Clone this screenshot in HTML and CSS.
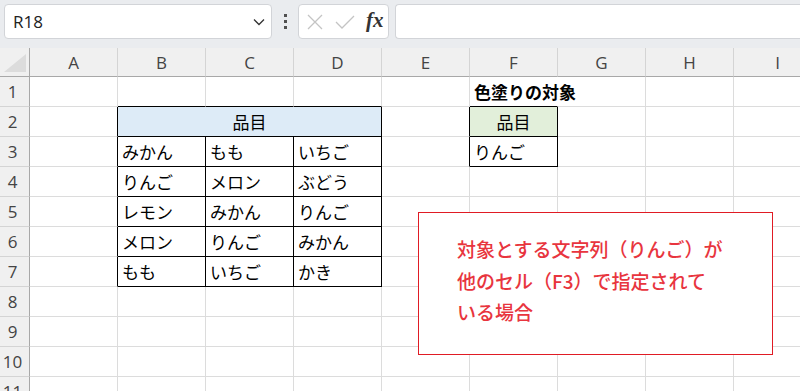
FILE: index.html
```html
<!DOCTYPE html>
<html lang="ja">
<head>
<meta charset="utf-8">
<title>Excel</title>
<link rel="stylesheet" href="styles.css">
</head>
<body>
<div class="toolbar">
  <div class="namebox">
    <span class="name">R18</span>
    <svg class="chev" width="12" height="8" viewBox="0 0 12 8"><path d="M1 1.5 L6 6.5 L11 1.5" fill="none" stroke="#333" stroke-width="1.3"/></svg>
  </div>
  <div class="dots"><i></i><i></i><i></i></div>
  <div class="fbtns">
    <svg class="ico" width="16" height="16" viewBox="0 0 16 16"><path d="M1 1 L15 15 M15 1 L1 15" fill="none" stroke="#c4c4c4" stroke-width="1.3"/></svg>
    <svg class="ico" width="20" height="16" viewBox="0 0 20 16"><path d="M1 8 L7 14 L19 2" fill="none" stroke="#c4c4c4" stroke-width="1.3"/></svg>
    <span class="fx">fx</span>
  </div>
  <div class="formula"></div>
</div>

<div class="sheet">
  <div class="corner"><span class="tri"></span></div>
  <div class="ch">A</div><div class="ch">B</div><div class="ch">C</div><div class="ch">D</div><div class="ch">E</div><div class="ch">F</div><div class="ch">G</div><div class="ch">H</div><div class="ch">I</div>

  <div class="rh">1</div>
  <div class="c"></div><div class="c tt"></div><div class="c tt"></div><div class="c tt"></div><div class="c"></div><div class="c tt nor bold">色塗りの対象</div><div class="c"></div><div class="c"></div><div class="c"></div>

  <div class="rh">2</div>
  <div class="c tl"></div><div class="c t blue span3">品目</div><div class="c tl"></div><div class="c t green">品目</div><div class="c"></div><div class="c"></div><div class="c"></div>

  <div class="rh">3</div>
  <div class="c tl"></div><div class="c t">みかん</div><div class="c t">もも</div><div class="c t">いちご</div><div class="c tl"></div><div class="c t">りんご</div><div class="c"></div><div class="c"></div><div class="c"></div>

  <div class="rh">4</div>
  <div class="c tl"></div><div class="c t">りんご</div><div class="c t">メロン</div><div class="c t">ぶどう</div><div class="c"></div><div class="c"></div><div class="c"></div><div class="c"></div><div class="c"></div>

  <div class="rh">5</div>
  <div class="c tl"></div><div class="c t">レモン</div><div class="c t">みかん</div><div class="c t">りんご</div><div class="c"></div><div class="c"></div><div class="c"></div><div class="c"></div><div class="c"></div>

  <div class="rh">6</div>
  <div class="c tl"></div><div class="c t">メロン</div><div class="c t">りんご</div><div class="c t">みかん</div><div class="c"></div><div class="c"></div><div class="c"></div><div class="c"></div><div class="c"></div>

  <div class="rh">7</div>
  <div class="c tl"></div><div class="c t">もも</div><div class="c t">いちご</div><div class="c t">かき</div><div class="c"></div><div class="c"></div><div class="c"></div><div class="c"></div><div class="c"></div>

  <div class="rh">8</div>
  <div class="c"></div><div class="c"></div><div class="c"></div><div class="c"></div><div class="c"></div><div class="c"></div><div class="c"></div><div class="c"></div><div class="c"></div>

  <div class="rh">9</div>
  <div class="c"></div><div class="c"></div><div class="c"></div><div class="c"></div><div class="c"></div><div class="c"></div><div class="c"></div><div class="c"></div><div class="c"></div>

  <div class="rh">10</div>
  <div class="c"></div><div class="c"></div><div class="c"></div><div class="c"></div><div class="c"></div><div class="c"></div><div class="c"></div><div class="c"></div><div class="c"></div>

  <div class="rh">11</div>
  <div class="c"></div><div class="c"></div><div class="c"></div><div class="c"></div><div class="c"></div><div class="c"></div><div class="c"></div><div class="c"></div><div class="c"></div>
</div>

<div class="callout">対象とする文字列（りんご）が<br>他のセル（F3）で指定されて<br>いる場合</div>
</body>
</html>
```

FILE: styles.css
```css
html, body {
  margin: 0;
  padding: 0;
  width: 800px;
  height: 391px;
  overflow: hidden;
  background: #ffffff;
}
body {
  position: relative;
  font-family: "Noto Sans CJK JP", "Noto Sans", sans-serif;
}

.toolbar {
  height: 48px;
  box-sizing: border-box;
  background: #eaecef;
  display: flex;
  align-items: flex-start;
  padding: 4px 0 0 4px;
}
.namebox {
  width: 268px;
  height: 35px;
  box-sizing: border-box;
  background: #fff;
  border: 1px solid #d2d4d8;
  border-radius: 4px;
  display: flex;
  align-items: center;
  justify-content: space-between;
  padding: 0 6px 0 8px;
}
.name {
  font-family: "Open Sans", "Noto Sans", sans-serif;
  font-size: 17px;
  color: #222;
}
.chev { margin-top: 1px; }
.dots {
  width: 26px;
  height: 35px;
  display: flex;
  flex-direction: column;
  align-items: center;
  justify-content: center;
  gap: 3px;
}
.dots i {
  display: block;
  width: 3px;
  height: 3px;
  background: #505050;
}
.fbtns {
  width: 91px;
  height: 35px;
  box-sizing: border-box;
  background: #fff;
  border: 1px solid #d2d4d8;
  border-radius: 4px;
  display: flex;
  align-items: center;
  padding: 0 0 0 8px;
  gap: 12px;
}
.ico { display: block; }
.fx {
  font-family: "Liberation Serif", "DejaVu Serif", serif;
  font-style: italic;
  font-weight: bold;
  font-size: 21px;
  color: #333;
  margin-left: -1px;
  margin-top: -3px;
}
.formula {
  margin-left: 6px;
  flex: 1;
  height: 35px;
  box-sizing: border-box;
  background: #fff;
  border: 1px solid #d2d4d8;
  border-right: none;
  border-radius: 4px 0 0 4px;
}

.sheet {
  display: grid;
  grid-template-columns: 30px repeat(9, 88px);
  grid-template-rows: 29px repeat(11, 30px);
  width: 822px;
}
.sheet > div {
  box-sizing: border-box;
  border-right: 1px solid #dcdcdc;
  border-bottom: 1px solid #dcdcdc;
  display: flex;
  align-items: center;
  white-space: nowrap;
  min-width: 0;
}
.corner {
  background: #f0f0f0;
  border-right-color: #a8a8a8 !important;
  border-bottom-color: #a8a8a8 !important;
  position: relative;
}
.tri {
  position: absolute;
  right: 3px;
  bottom: 4px;
  width: 0;
  height: 0;
  border-left: 22px solid transparent;
  border-bottom: 18px solid #dcdcdc;
}
.ch {
  background: #f0f0f0;
  justify-content: center;
  font-family: "Open Sans", "Noto Sans", sans-serif;
  font-size: 17px;
  color: #444;
  border-right-color: #d4d4d4 !important;
  border-bottom-color: #a8a8a8 !important;
  padding-top: 1px;
}
.rh {
  background: #f0f0f0;
  justify-content: center;
  padding-right: 4px;
  font-family: "Open Sans", "Noto Sans", sans-serif;
  font-size: 17px;
  color: #444;
  border-right-color: #a8a8a8 !important;
  border-bottom-color: #d4d4d4 !important;
}
.c {
  font-size: 17px;
  color: #000;
  padding-left: 4px;
}
.sheet > .t {
  border-right-color: #000;
  border-bottom-color: #000;
}
.sheet > .tl { border-right-color: #000; }
.sheet > .tt { border-bottom-color: #000; }
.sheet > .nor { border-right-color: transparent; }
.bold {
  font-weight: bold;
  overflow: visible;
}
.span3 { grid-column: span 3; }
.blue {
  background: #ddebf7;
  justify-content: center;
  padding-left: 0;
}
.green {
  background: #e2efda;
  justify-content: center;
  padding-left: 0;
}

.callout {
  position: absolute;
  left: 418px;
  top: 212px;
  width: 355px;
  height: 143px;
  box-sizing: border-box;
  border: 1px solid #e01b24;
  background: #fff;
  padding: 20px 0 0 38px;
  font-size: 19px;
  font-weight: 500;
  line-height: 31.5px;
  color: #e8353e;
}
```
